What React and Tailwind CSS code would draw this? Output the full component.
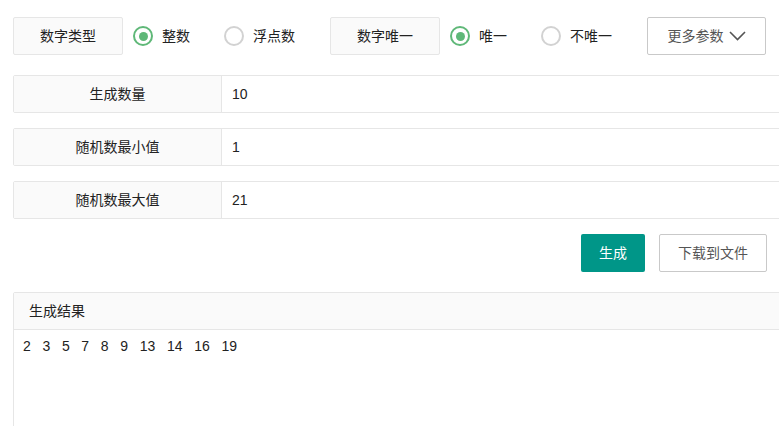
import React from "react";

const font = { fontFamily: '"Liberation Sans", "Noto Sans CJK SC", sans-serif' };

function Radio({ checked, label }) {
  return (
    <div className="flex items-center pl-[10px] pr-[24px] h-[38px] cursor-pointer">
      <span
        className={
          "flex items-center justify-center w-[20px] h-[20px] rounded-full border-[2px] " +
          (checked ? "border-[#5FB878]" : "border-[#d2d2d2]")
        }
      >
        {checked && <span className="w-[9px] h-[9px] rounded-full bg-[#5FB878]" />}
      </span>
      <span className="ml-[9px] text-[14px] text-[#222]">{label}</span>
    </div>
  );
}

function LabelBox({ children, className = "" }) {
  return (
    <div
      className={
        "w-[110px] h-[38px] flex items-center justify-center border border-[#e6e6e6] bg-[#FAFAFA] text-[14px] text-[#222] rounded-[2px] " +
        className
      }
    >
      {children}
    </div>
  );
}

function Row({ label, value, className = "" }) {
  return (
    <div className={"flex w-[800px] h-[38px] border border-[#e6e6e6] rounded-[2px] " + className}>
      <div className="w-[208px] flex items-center justify-center bg-[#FAFAFA] border-r border-[#e6e6e6] text-[14px] text-[#222]">
        {label}
      </div>
      <div className="flex-1 flex items-center pl-[10px] text-[14px] text-[#222]">{value}</div>
    </div>
  );
}

export default function App() {
  const nums = [2, 3, 5, 7, 8, 9, 13, 14, 16, 19];
  return (
    <div className="w-[779px] h-[426px] overflow-hidden bg-white" style={font}>
      <div className="pl-[13px] pt-[17px]">
        <div className="flex items-center">
          <LabelBox>数字类型</LabelBox>
          <Radio checked label="整数" />
          <Radio label="浮点数" />
          <LabelBox className="ml-[11px]">数字唯一</LabelBox>
          <Radio checked label="唯一" />
          <Radio label="不唯一" />
          <button className="ml-[11px] w-[119px] h-[38px] flex items-center justify-center gap-[5px] border border-[#c9c9c9] rounded-[2px] bg-white text-[14px] text-[#555]">
            <span>更多参数</span>
            <svg width="17" height="10" viewBox="0 0 17 10" fill="none">
              <polyline points="1,1 8.5,8.5 16,1" stroke="#555" strokeWidth="1.6" />
            </svg>
          </button>
        </div>

        <Row label="生成数量" value="10" className="mt-[20px]" />
        <Row label="随机数最小值" value="1" className="mt-[15px]" />
        <Row label="随机数最大值" value="21" className="mt-[15px]" />

        <div className="flex justify-end gap-[14px] w-[754px] mt-[15px]">
          <button className="w-[64px] h-[38px] bg-[#009688] text-white text-[14px] rounded-[2px]">生成</button>
          <button className="w-[108px] h-[38px] border border-[#c9c9c9] bg-white text-[#555] text-[14px] rounded-[2px]">
            下载到文件
          </button>
        </div>

        <div className="mt-[20px] w-[800px] h-[200px] border border-[#e6e6e6] rounded-[2px]">
          <div className="h-[37px] flex items-center pl-[15px] bg-[#FAFAFA] border-b border-[#e6e6e6] text-[14px] text-[#222]">
            生成结果
          </div>
          <div className="pl-[9px] pt-[6px] text-[14px] text-[#222] whitespace-pre">
            {nums.join("   ")}
          </div>
        </div>
      </div>
    </div>
  );
}
